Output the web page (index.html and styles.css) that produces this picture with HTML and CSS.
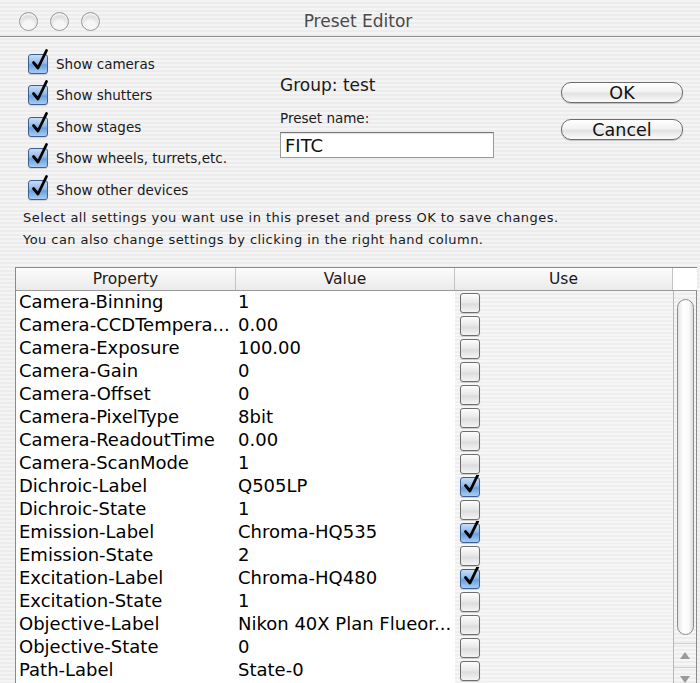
FILE: index.html
```html
<!DOCTYPE html>
<html>
<head>
<meta charset="utf-8">
<title>Preset Editor</title>
<link rel="stylesheet" href="styles.css">
</head>
<body>
<div class="window">
  <div class="titlebar">
    <div class="lights">
      <span class="light"></span><span class="light"></span><span class="light"></span>
    </div>
    <div class="title">Preset Editor</div>
  </div>

  <div class="top">
    <div class="checks">
      <label class="check"><span class="cb on"><svg viewBox="0 0 20 24"><path d="M4.5 13.5 L9 19 L17.5 1.5"/></svg></span>Show cameras</label>
      <label class="check"><span class="cb on"><svg viewBox="0 0 20 24"><path d="M4.5 13.5 L9 19 L17.5 1.5"/></svg></span>Show shutters</label>
      <label class="check"><span class="cb on"><svg viewBox="0 0 20 24"><path d="M4.5 13.5 L9 19 L17.5 1.5"/></svg></span>Show stages</label>
      <label class="check"><span class="cb on"><svg viewBox="0 0 20 24"><path d="M4.5 13.5 L9 19 L17.5 1.5"/></svg></span>Show wheels, turrets,etc.</label>
      <label class="check"><span class="cb on"><svg viewBox="0 0 20 24"><path d="M4.5 13.5 L9 19 L17.5 1.5"/></svg></span>Show other devices</label>
    </div>
    <div class="group">
      <div class="group-name">Group: test</div>
      <div class="field-label">Preset name:</div>
      <div class="field">FITC</div>
    </div>
    <div class="buttons">
      <div class="btn">OK</div>
      <div class="btn">Cancel</div>
    </div>
  </div>

  <div class="hint">
    <div>Select all settings you want use in this preset and press OK to save changes.</div>
    <div>You can also change settings by clicking in the right hand column.</div>
  </div>

  <div class="table">
    <div class="thead">
      <div class="th">Property</div>
      <div class="th">Value</div>
      <div class="th">Use</div>
      <div class="th corner"></div>
    </div>
    <div class="tbody">
      <div class="rows">
        <div class="td">Camera-Binning</div><div class="td val">1</div><div class="td use"><span class="cb"></span></div>
        <div class="td">Camera-CCDTempera...</div><div class="td val">0.00</div><div class="td use"><span class="cb"></span></div>
        <div class="td">Camera-Exposure</div><div class="td val">100.00</div><div class="td use"><span class="cb"></span></div>
        <div class="td">Camera-Gain</div><div class="td val">0</div><div class="td use"><span class="cb"></span></div>
        <div class="td">Camera-Offset</div><div class="td val">0</div><div class="td use"><span class="cb"></span></div>
        <div class="td">Camera-PixelType</div><div class="td val">8bit</div><div class="td use"><span class="cb"></span></div>
        <div class="td">Camera-ReadoutTime</div><div class="td val">0.00</div><div class="td use"><span class="cb"></span></div>
        <div class="td">Camera-ScanMode</div><div class="td val">1</div><div class="td use"><span class="cb"></span></div>
        <div class="td">Dichroic-Label</div><div class="td val">Q505LP</div><div class="td use"><span class="cb on"><svg viewBox="0 0 20 24"><path d="M4.5 13.5 L9 19 L17.5 1.5"/></svg></span></div>
        <div class="td">Dichroic-State</div><div class="td val">1</div><div class="td use"><span class="cb"></span></div>
        <div class="td">Emission-Label</div><div class="td val">Chroma-HQ535</div><div class="td use"><span class="cb on"><svg viewBox="0 0 20 24"><path d="M4.5 13.5 L9 19 L17.5 1.5"/></svg></span></div>
        <div class="td">Emission-State</div><div class="td val">2</div><div class="td use"><span class="cb"></span></div>
        <div class="td">Excitation-Label</div><div class="td val">Chroma-HQ480</div><div class="td use"><span class="cb on"><svg viewBox="0 0 20 24"><path d="M4.5 13.5 L9 19 L17.5 1.5"/></svg></span></div>
        <div class="td">Excitation-State</div><div class="td val">1</div><div class="td use"><span class="cb"></span></div>
        <div class="td">Objective-Label</div><div class="td val">Nikon 40X Plan Flueor...</div><div class="td use"><span class="cb"></span></div>
        <div class="td">Objective-State</div><div class="td val">0</div><div class="td use"><span class="cb"></span></div>
        <div class="td">Path-Label</div><div class="td val">State-0</div><div class="td use"><span class="cb"></span></div>
        <div class="td"></div><div class="td val"></div><div class="td use"><span class="cb"></span></div>
      </div>
      <div class="scrollbar">
        <div class="thumb"></div>
        <div class="arrows">
          <div class="arrow up"></div>
          <div class="arrow down"></div>
        </div>
      </div>
    </div>
  </div>
</div>
</body>
</html>
```

FILE: styles.css
```css
html, body {
  margin: 0;
  padding: 0;
}

body {
  font-family: "DejaVu Sans", "Liberation Sans", sans-serif;
  color: #111;
}

.window {
  width: 700px;
  height: 683px;
  overflow: hidden;
  background: repeating-linear-gradient(180deg, #f4f4f4 0 2px, #ececec 2px 4px);
}

/* title bar */
.titlebar {
  height: 36px;
  border-bottom: 1px solid #8c8c8c;
  box-shadow: 0 1px 0 #fafafa;
  display: flex;
  align-items: center;
}

.lights {
  display: flex;
  gap: 12px;
  padding-left: 19px;
  padding-top: 6px;
}

.light {
  width: 17px;
  height: 17px;
  border-radius: 50%;
  border: 1px solid #9a9a9a;
  background: radial-gradient(circle at 50% 80%, #f6f6f6 0 35%, #d2d2d2 75%, #bdbdbd 100%);
  box-shadow: inset 0 2px 2px #f8f8f8;
}

.title {
  flex: 1;
  text-align: center;
  font-size: 17px;
  color: #4a4a4a;
  padding-right: 84px;
  padding-top: 6px;
}

/* upper controls */
.top {
  display: flex;
  padding-top: 16px;
}

.checks {
  display: flex;
  flex-direction: column;
  gap: 10.5px;
  padding-left: 28px;
  width: 252px;
}

.check {
  display: flex;
  align-items: center;
  height: 21px;
  font-size: 13.5px;
  gap: 8px;
  color: #1a1a1a;
}

.cb {
  position: relative;
  display: inline-block;
  width: 18px;
  height: 18px;
  border: 1px solid #6e6e6e;
  border-radius: 3px;
  background: linear-gradient(180deg, #fdfdfd 0%, #e6e6e6 50%, #dcdcdc 55%, #f4f4f4 100%);
  box-shadow: 0 1px 1px rgba(0,0,0,0.15);
  flex: none;
}

.cb.on {
  border-color: #3c5f8f;
  background: linear-gradient(180deg, #c9def6 0%, #8fb8e8 45%, #6a9fdd 55%, #a9cdf3 100%);
}

.cb svg {
  position: absolute;
  left: 0;
  top: -6px;
  width: 20px;
  height: 24px;
  overflow: visible;
}

.cb svg path {
  fill: none;
  stroke: #000;
  stroke-width: 2.8;
  stroke-linecap: round;
  stroke-linejoin: round;
}

.group {
  display: flex;
  flex-direction: column;
  padding-top: 22px;
  width: 214px;
}

.group-name {
  font-size: 17px;
  line-height: 20px;
  color: #1a1a1a;
}

.field-label {
  margin-top: 15px;
  font-size: 13.5px;
  line-height: 16px;
  color: #1a1a1a;
}

.field {
  margin-top: 6px;
  height: 24px;
  border: 1px solid #9a9a9a;
  border-top-color: #777;
  background: #fff;
  box-shadow: inset 0 1px 1px rgba(0,0,0,0.12);
  font-size: 18px;
  line-height: 25px;
  padding-left: 4px;
  color: #111;
}

.buttons {
  margin-left: auto;
  margin-right: 17px;
  padding-top: 29px;
  display: flex;
  flex-direction: column;
  gap: 16px;
}

.btn {
  width: 120px;
  height: 19px;
  border: 1px solid #6c6c6c;
  border-radius: 10px;
  background: linear-gradient(180deg, #ffffff 0%, #f2f2f2 45%, #e2e2e2 55%, #fbfbfb 100%);
  box-shadow: 0 1px 1px rgba(0,0,0,0.2);
  text-align: center;
  font-size: 17.5px;
  line-height: 20px;
  color: #111;
}

/* instructions */
.hint {
  margin-top: 7px;
  padding-left: 23px;
  font-size: 13px;
  letter-spacing: 0.45px;
  line-height: 22px;
  color: #1a1a1a;
}

/* settings table */
.table {
  margin: 16px 3px 0 15px;
  border: 1px solid #8a8a8a;
  border-bottom: none;
  background: #fff;
}

.thead {
  display: grid;
  grid-template-columns: 220px 219px 218px 24px;
  height: 22px;
  border-bottom: 1px solid #9a9a9a;
  background: linear-gradient(180deg, #fcfcfc 0%, #f3f3f3 50%, #eaeaea 100%);
}

.th {
  text-align: center;
  font-size: 15.5px;
  line-height: 22px;
  color: #1a1a1a;
  border-right: 1px solid #c4c4c4;
}

.th.corner {
  border-right: none;
  background: #fff;
}

.tbody {
  display: flex;
  height: 400px;
}

.rows {
  display: grid;
  grid-template-columns: 220px 219px 218px;
  grid-auto-rows: 23px;
  align-content: start;
}

.td {
  font-size: 18px;
  line-height: 22px;
  padding-left: 3px;
  white-space: nowrap;
  overflow: hidden;
  color: #000;
}

.td.val {
  padding-left: 2px;
}

.td.use {
  padding-left: 5px;
  display: flex;
  align-items: center;
  background: repeating-linear-gradient(180deg, #f6f6f6 0 2px, #eeeeee 2px 4px);
}

.td.use .cb {
  width: 18px;
  height: 18px;
}

/* vertical scroller */
.scrollbar {
  width: 23px;
  border-left: 1px solid #b8b8b8;
  background: repeating-linear-gradient(180deg, #f6f6f6 0 2px, #ededed 2px 4px);
  display: flex;
  flex-direction: column;
  align-items: center;
}

.thumb {
  margin-top: 8px;
  width: 15px;
  height: 334px;
  border: 1px solid #8c8c8c;
  border-radius: 9px;
  background: linear-gradient(90deg, #e4e4e4 0%, #ffffff 35%, #fbfbfb 70%, #dcdcdc 100%);
}

.arrows {
  margin-top: 8px;
  width: 100%;
  border-top: 1px solid #d0d0d0;
}

.arrow {
  height: 23px;
  display: flex;
  align-items: center;
  justify-content: center;
}

.arrow.up {
  border-bottom: 1px solid #d0d0d0;
}

.arrow::before {
  content: "";
  width: 0;
  height: 0;
  border-left: 5px solid transparent;
  border-right: 5px solid transparent;
}

.arrow.up::before {
  border-bottom: 7px solid #9a9a9a;
}

.arrow.down::before {
  border-top: 7px solid #9a9a9a;
}
```
